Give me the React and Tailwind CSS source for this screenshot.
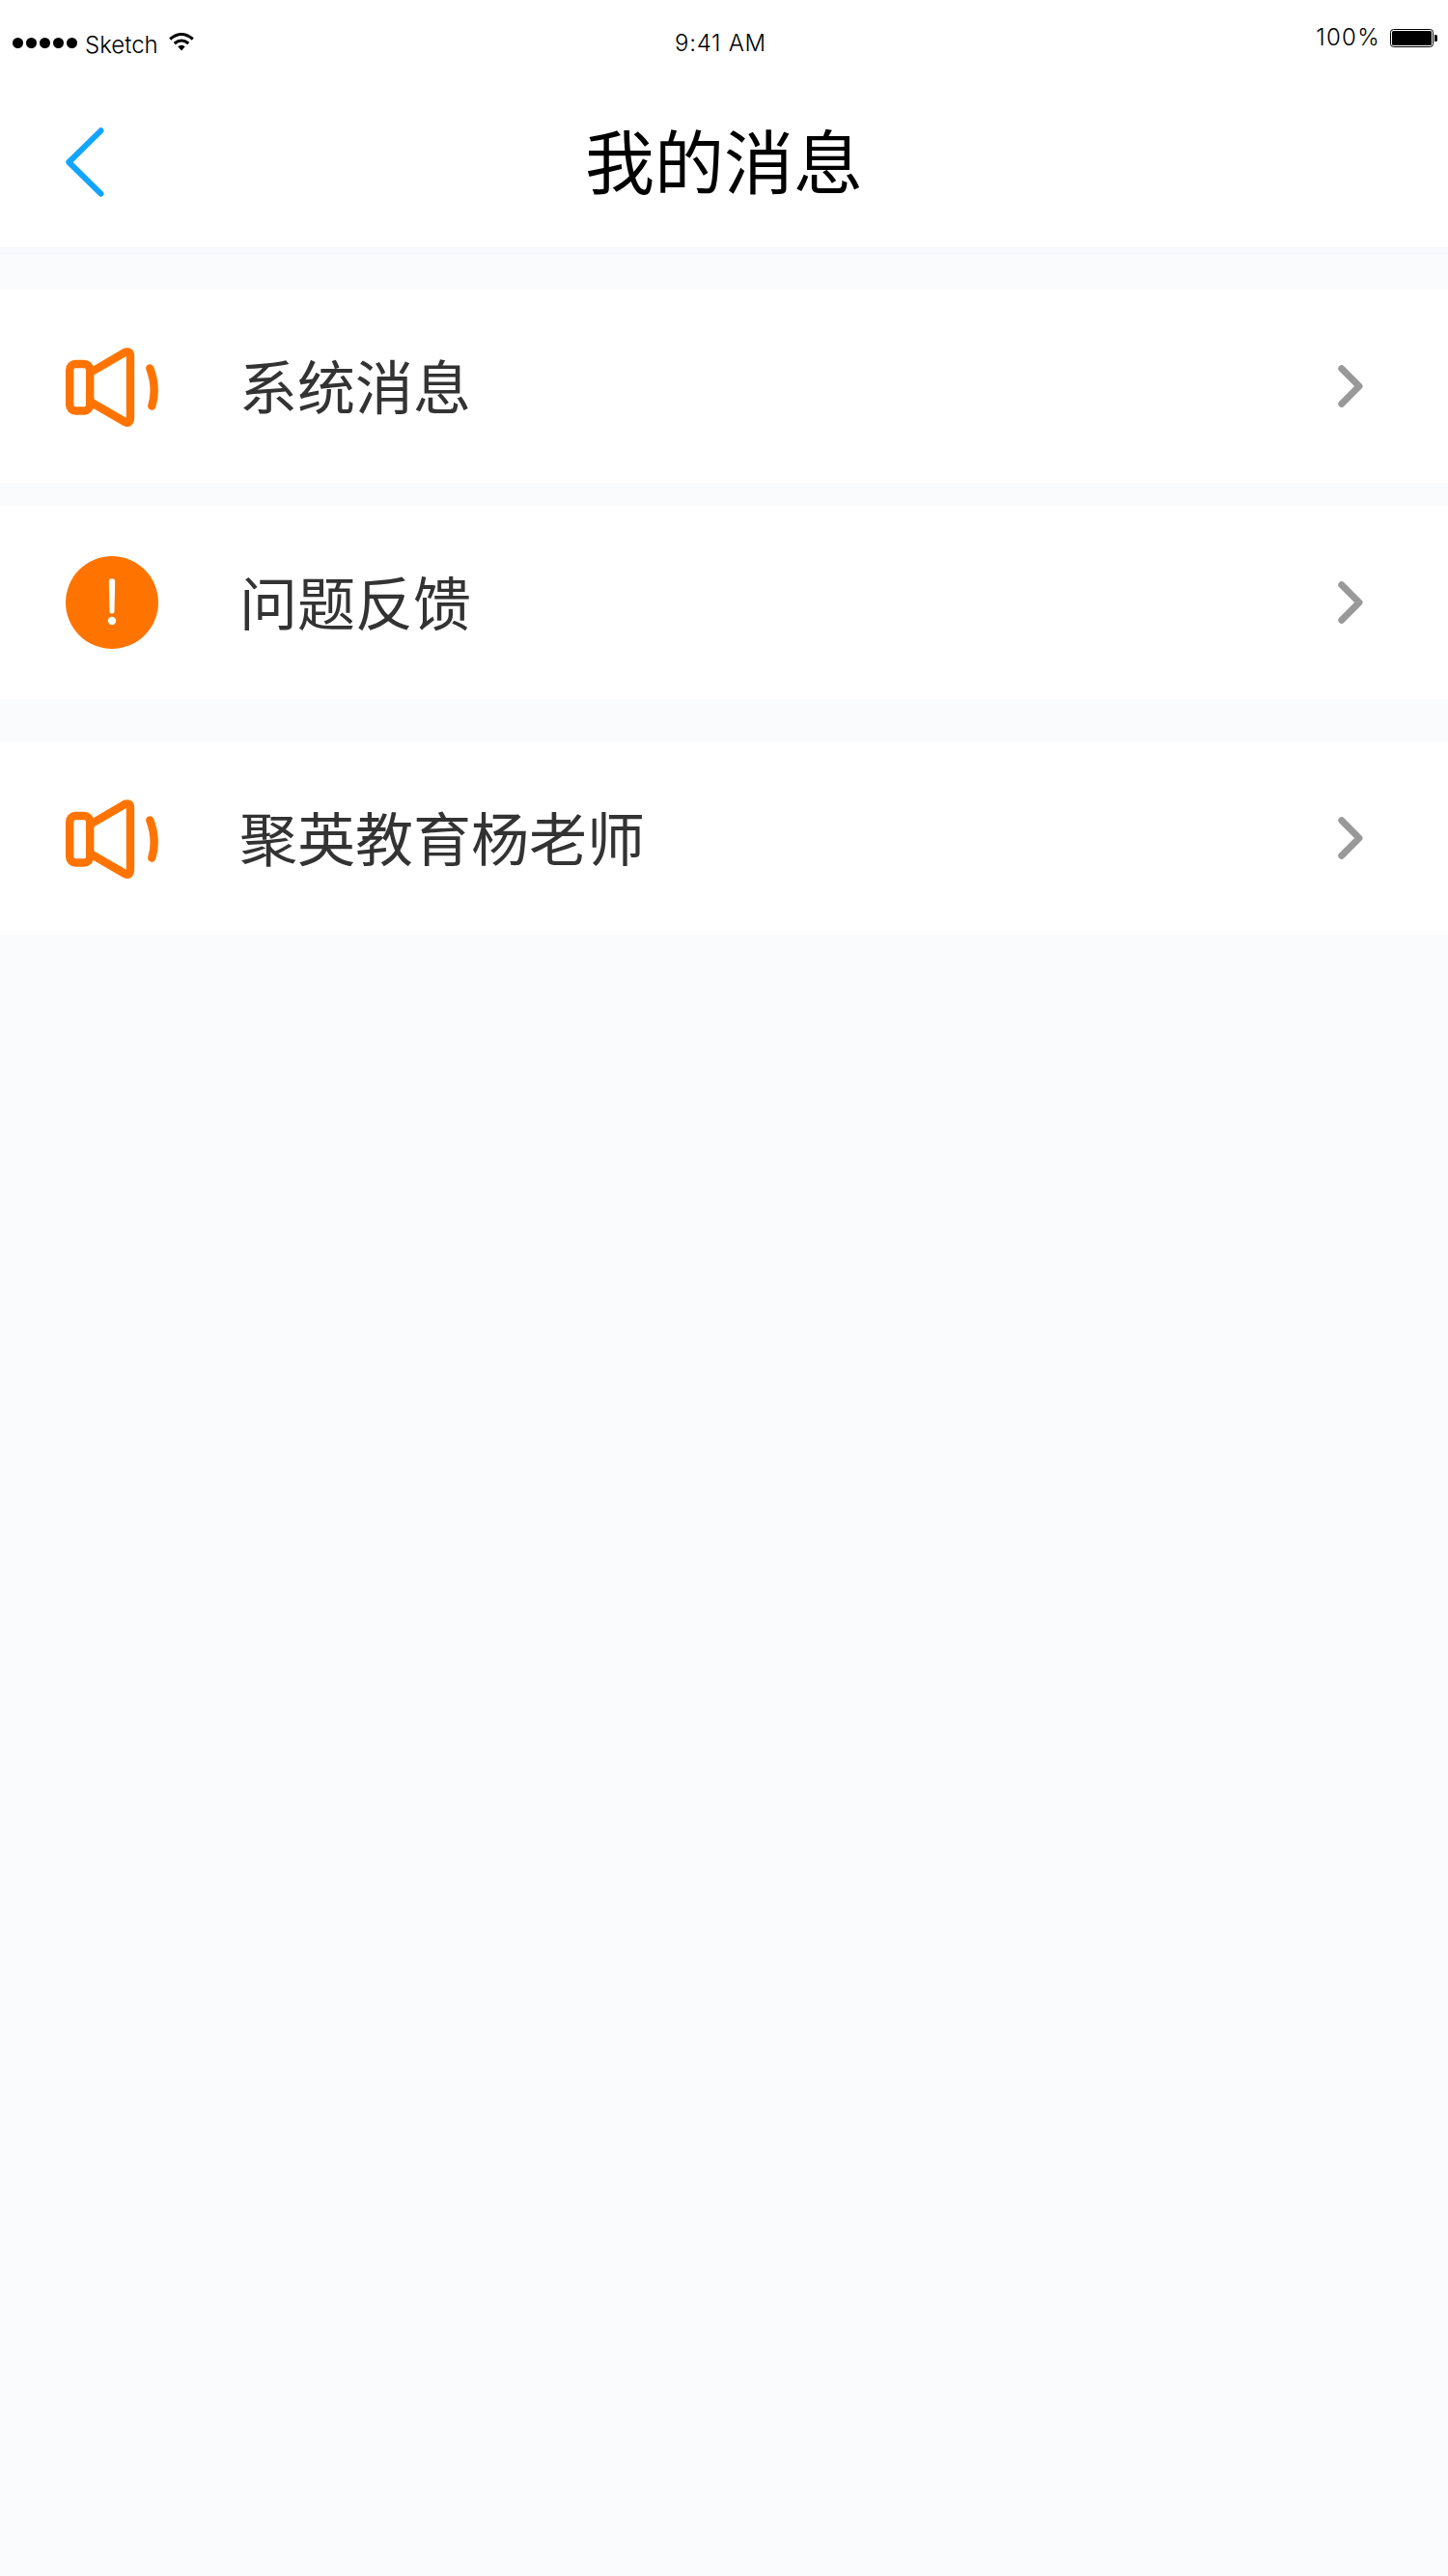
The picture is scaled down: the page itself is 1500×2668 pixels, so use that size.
function SpeakerIcon() {
  return (
    <svg className="mt-[2px]" width="96" height="82" viewBox="0 0 96 82" fill="none" stroke="#ff7400" strokeWidth="8.400" strokeLinecap="round" strokeLinejoin="round">
      <rect x="4.200" y="17" width="21" height="48.500" rx="6" />
      <path d="M27 25 61.500 4.800Q67 3 67 9V73Q66.500 79.500 61.500 77L27 57" />
      <path d="M87.300 21.500Q95 42 89.300 60.500" />
    </svg>
  );
}

function AlertIcon() {
  return (
    <svg width="96" height="96" viewBox="0 0 96 96">
      <circle cx="48" cy="48" r="48" fill="#ff7400" />
      <path d="M44.800 26.500a3.200 3.200 0 0 1 6.400 0L50.500 57a2.500 2.500 0 0 1-5 0Z" fill="#fff" />
      <circle cx="48" cy="67" r="4.200" fill="#fff" />
    </svg>
  );
}

function Row({ icon, label }) {
  return (
    <button className="flex h-[200px] w-full items-center bg-white pl-[68px] pr-[88px] text-left">
      <span className="flex w-[180px] items-center">{icon}</span>
      <span className='flex-1 pb-[4px] font-["Noto_Sans_CJK_SC",sans-serif] text-[60px] leading-[88px] text-[#333]'>{label}</span>
      <svg width="26" height="44" viewBox="0 0 26 44" fill="none" stroke="#999" strokeWidth="7" strokeLinecap="round" strokeLinejoin="round">
        <path d="M3.800 3.800 22 22 3.800 40.200" />
      </svg>
    </button>
  );
}

function StatusBar() {
  return (
    <div className='flex h-20 items-start justify-between pl-[13px] pr-[11px] font-["Inter",sans-serif] font-[270] text-black'>
      <div className="flex w-[400px] items-start">
        <div className="flex gap-[3px] pt-[39px]">
          {[0, 1, 2, 3, 4].map((i) => (
            <i key={i} className="size-[11px] rounded-full bg-black" />
          ))}
        </div>
        <span className="ml-[8px] mt-[32px] w-[76px] text-[24px] leading-[30px]">Sketch</span>
        <svg className="ml-[11px] mt-[34px]" width="26" height="19" viewBox="0 0 26 19" fill="none" stroke="#000" strokeWidth="3">
          <path d="M1.200 6.500Q13-3.500 24.800 6.500M5.700 11Q13 5 20.300 11" />
          <path d="M9.300 14.300Q13 11.200 16.700 14.300L13 18.500Z" fill="#000" stroke="none" />
        </svg>
      </div>
      <span className="mr-[9px] mt-[30px] text-[24px] leading-[30px] tracking-[0.7px]">9:41 AM</span>
      <div className="flex w-[400px] items-start justify-end">
        <span className="mt-[24px] text-[24px] leading-[30px] tracking-[1.3px]">100%</span>
        <svg className="ml-[10px] mt-[30px]" width="49" height="19" viewBox="0 0 49 19">
          <rect x="0.500" y="0.500" width="44" height="18" rx="3" fill="none" stroke="#000" />
          <rect x="2" y="2" width="41" height="15" rx="1.500" />
          <path d="M46 6h1.500a1.500 1.500 0 0 1 1.500 1.500v4a1.500 1.500 0 0 1-1.500 1.500H46Z" />
        </svg>
      </div>
    </div>
  );
}

export default function App() {
  return (
    <div className="min-h-[2668px] w-[1500px] bg-[#fafbfd]">
      <header className="h-[256px] bg-white">
        <StatusBar />
        <div className="flex h-[176px] items-start justify-between pl-[68px] pr-[68px]">
          <svg className="mt-[52px]" width="40" height="72" viewBox="0 0 40 72" fill="none" stroke="#12a5ff" strokeWidth="6" strokeLinecap="round" strokeLinejoin="round">
            <path d="M36.500 3.300 3.300 36 36.500 68.700" />
          </svg>
          <h1 className='mt-[32px] font-["Noto_Sans_CJK_SC",sans-serif] text-[72px] leading-[104px] text-black'>我的消息</h1>
          <span className="w-10" />
        </div>
      </header>
      <div className="h-11 border-t-8 border-[#f6f8fd]" />
      <main>
        <Row icon={<SpeakerIcon />} label="系统消息" />
        <div className="h-6" />
        <Row icon={<AlertIcon />} label="问题反馈" />
        <div className="h-11" />
        <Row icon={<SpeakerIcon />} label="聚英教育杨老师" />
      </main>
    </div>
  );
}
